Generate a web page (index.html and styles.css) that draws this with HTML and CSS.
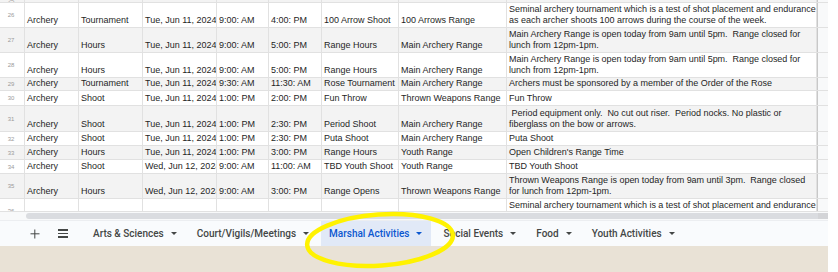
FILE: index.html
```html
<!DOCTYPE html>
<html>
<head>
<meta charset="utf-8">
<link rel="stylesheet" href="styles.css">
</head>
<body>
<div class="page">
  <div class="main">
    <div class="sheet">
      <div class="grid">
        <div class="row h3 band">
          <div class="num">25</div><div class="c">Archery</div><div class="c">Hours</div><div class="c">Mon, Jun 10, 2024</div><div class="c">9:00: AM</div><div class="c">5:00: PM</div><div class="c">Range Opens</div><div class="c">Thrown Weapons Range</div><div class="c"><span>Thrown Weapons Range is open today from 9am until 3pm.  Range closed for lunch</span></div><div class="e"></div>
        </div>
        <div class="row h25">
          <div class="num">26</div><div class="c">Archery</div><div class="c">Tournament</div><div class="c">Tue, Jun 11, 2024</div><div class="c">9:00: AM</div><div class="c">4:00: PM</div><div class="c">100 Arrow Shoot</div><div class="c">100 Arrows Range</div><div class="c"><span>Seminal archery tournament which is a test of shot placement and endurance<br>as each archer shoots 100 arrows during the course of the week.</span></div><div class="e"></div>
        </div>
        <div class="row h25 band">
          <div class="num">27</div><div class="c">Archery</div><div class="c">Hours</div><div class="c">Tue, Jun 11, 2024</div><div class="c">9:00: AM</div><div class="c">5:00: PM</div><div class="c">Range Hours</div><div class="c">Main Archery Range</div><div class="c"><span>Main Archery Range is open today from 9am until 5pm.&nbsp; Range closed for<br>lunch from 12pm-1pm.</span></div><div class="e"></div>
        </div>
        <div class="row h25">
          <div class="num">28</div><div class="c">Archery</div><div class="c">Hours</div><div class="c">Tue, Jun 11, 2024</div><div class="c">9:00: AM</div><div class="c">5:00: PM</div><div class="c">Range Hours</div><div class="c">Main Archery Range</div><div class="c"><span>Main Archery Range is open today from 9am until 5pm.&nbsp; Range closed for<br>lunch from 12pm-1pm.</span></div><div class="e"></div>
        </div>
        <div class="row h13 band">
          <div class="num">29</div><div class="c">Archery</div><div class="c">Tournament</div><div class="c">Tue, Jun 11, 2024</div><div class="c">9:30: AM</div><div class="c">11:30: AM</div><div class="c">Rose Tournament</div><div class="c">Main Archery Range</div><div class="c"><span>Archers must be sponsored by a member of the Order of the Rose</span></div><div class="e"></div>
        </div>
        <div class="row h15">
          <div class="num">30</div><div class="c">Archery</div><div class="c">Shoot</div><div class="c">Tue, Jun 11, 2024</div><div class="c">1:00: PM</div><div class="c">2:00: PM</div><div class="c">Fun Throw</div><div class="c">Thrown Weapons Range</div><div class="c"><span>Fun Throw</span></div><div class="e"></div>
        </div>
        <div class="row h26 band">
          <div class="num">31</div><div class="c">Archery</div><div class="c">Shoot</div><div class="c">Tue, Jun 11, 2024</div><div class="c">1:00: PM</div><div class="c">2:30: PM</div><div class="c">Period Shoot</div><div class="c">Main Archery Range</div><div class="c"><span>&nbsp;Period equipment only.&nbsp; No cut out riser.&nbsp; Period nocks. No plastic or<br>fiberglass on the bow or arrows.</span></div><div class="e"></div>
        </div>
        <div class="row h14">
          <div class="num">32</div><div class="c">Archery</div><div class="c">Shoot</div><div class="c">Tue, Jun 11, 2024</div><div class="c">1:00: PM</div><div class="c">2:30: PM</div><div class="c">Puta Shoot</div><div class="c">Main Archery Range</div><div class="c"><span>Puta Shoot</span></div><div class="e"></div>
        </div>
        <div class="row h14 band">
          <div class="num">33</div><div class="c">Archery</div><div class="c">Hours</div><div class="c">Tue, Jun 11, 2024</div><div class="c">1:00: PM</div><div class="c">3:00: PM</div><div class="c">Range Hours</div><div class="c">Youth Range</div><div class="c"><span>Open Children's Range Time</span></div><div class="e"></div>
        </div>
        <div class="row h14">
          <div class="num">34</div><div class="c">Archery</div><div class="c">Shoot</div><div class="c">Wed, Jun 12, 2024</div><div class="c">9:00: AM</div><div class="c">11:00: AM</div><div class="c">TBD Youth Shoot</div><div class="c">Youth Range</div><div class="c"><span>TBD Youth Shoot</span></div><div class="e"></div>
        </div>
        <div class="row h25 band">
          <div class="num">35</div><div class="c">Archery</div><div class="c">Hours</div><div class="c">Wed, Jun 12, 2024</div><div class="c">9:00: AM</div><div class="c">3:00: PM</div><div class="c">Range Opens</div><div class="c">Thrown Weapons Range</div><div class="c"><span>Thrown Weapons Range is open today from 9am until 3pm.&nbsp; Range closed<br>for lunch from 12pm-1pm.</span></div><div class="e"></div>
        </div>
        <div class="row h25">
          <div class="num">36</div><div class="c"></div><div class="c"></div><div class="c"></div><div class="c"></div><div class="c"></div><div class="c"></div><div class="c"></div><div class="c top"><span>Seminal archery tournament which is a test of shot placement and endurance<br>as each archer shoots 100 arrows during the course of the week.</span></div><div class="e"></div>
        </div>
      </div>
      <div class="hscroll"><div class="thumb"></div><div class="track"></div></div>
    </div>
    <div class="tabbar">
      <div class="btn plus"><span class="plus-h"></span><span class="plus-v"></span></div>
      <div class="btn menu"><span class="bar"></span><span class="bar"></span><span class="bar"></span></div>
      <div class="tab"><span class="label">Arts &amp; Sciences</span><span class="caret"></span></div>
      <div class="tab"><span class="label">Court/Vigils/Meetings</span><span class="caret"></span></div>
      <div class="tab active"><span class="label">Marshal Activities</span><span class="caret"></span></div>
      <div class="tab"><span class="label">Social Events</span><span class="caret"></span></div>
      <div class="tab"><span class="label">Food</span><span class="caret"></span></div>
      <div class="tab"><span class="label">Youth Activities</span><span class="caret"></span></div>
    </div>
    <div class="desk"></div>
  </div>
  <svg class="circle" width="838" height="272" viewBox="0 0 838 272">
    <ellipse cx="380" cy="240" rx="73" ry="25.5" transform="rotate(-4 380 240)" fill="none" stroke="#fff200" stroke-width="4.5"/>
  </svg>
</div>
</body>
</html>
```
FILE: styles.css
```css
html, body {
  margin: 0;
  padding: 0;
  background: #ffffff;
}
.page {
  position: relative;
  width: 838px;
  height: 272px;
  overflow: hidden;
  font-family: "Liberation Sans", Arial, sans-serif;
}
.main {
  width: 828px;
  display: flex;
  flex-direction: column;
}
.sheet {
  display: flex;
  flex-direction: column;
}
.grid {
  height: 211px;
  overflow: hidden;
  display: flex;
  flex-direction: column;
}
.row {
  flex: none;
  display: grid;
  grid-template-columns: 25px 54px 64px 74px 52px 53px 77px 108px 310px 11px;
  box-sizing: border-box;
  border-bottom: 1px solid #e1e1e1;
  background: #ffffff;
  overflow: hidden;
}
.row.band { background: #f3f3f3; }
.h3 { height: 3px; }
.h13 { height: 13px; }
.h14 { height: 14px; }
.h15 { height: 15px; }
.h25 { height: 25px; }
.h26 { height: 26px; }
.c, .num, .e {
  box-sizing: border-box;
  border-right: 1px solid #e1e1e1;
  overflow: hidden;
  white-space: nowrap;
  min-width: 0;
}
.c {
  display: flex;
  align-items: flex-end;
  padding: 0 0 1px 2px;
  font-size: 9px;
  line-height: 11px;
  color: #1f1f1f;
}
.c span { display: block; letter-spacing: -0.02px; }
.c.top { align-items: flex-start; padding-top: 1px; }
.num {
  display: flex;
  align-items: center;
  justify-content: center;
  padding-right: 2px;
  font-size: 6px;
  color: #9a9a9a;
}
.e { border-right: none; background: #f8f9fa; border-left: 1px solid #c8c8c8; }

.hscroll {
  height: 9px;
  display: flex;
  align-items: center;
  padding-left: 26px;
  background: #f8f9fa;
  border-top: 1px solid #e1e1e1;
  box-sizing: border-box;
}
.thumb {
  width: 792px;
  height: 6px;
  background: #dadce0;
  border-radius: 3px 0 0 3px;
}
.track {
  flex: 1;
  height: 6px;
  background: #d3d4d7;
}
.tabbar {
  height: 26px;
  box-sizing: border-box;
  border-top: 1px solid #eceef1;
  background: #f9fbfd;
  display: flex;
  align-items: stretch;
  padding-left: 23px;
  font-family: Roboto, "Liberation Sans", sans-serif;
  font-size: 10px;
  font-weight: 500;
  color: #444746;
}
.btn {
  width: 24px;
  display: flex;
  align-items: center;
  justify-content: center;
  position: relative;
}
.menu { margin-left: 4px; flex-direction: column; gap: 2px; margin-right: 10px; }
.plus-h { position: absolute; width: 9px; height: 1.4px; background: #444746; top: 50%; left: 50%; transform: translate(-50%, -50%); }
.plus-v { position: absolute; width: 1.4px; height: 9px; background: #444746; top: 50%; left: 50%; transform: translate(-50%, -50%); }
.bar { width: 10px; height: 1.4px; background: #444746; display: block; }
.tab {
  display: flex;
  align-items: center;
  padding: 0 8px 0 8px;
  margin-right: 4px;
  gap: 7px;
  white-space: nowrap;
}
.tab.active {
  background: #e1e9f7;
  color: #0b57d0;
  padding-right: 9px;
}
.caret {
  width: 0;
  height: 0;
  border-left: 3px solid transparent;
  border-right: 3px solid transparent;
  border-top: 3px solid currentColor;
}
.desk {
  height: 26px;
  background: #e9e2d6;
}
.circle {
  position: absolute;
  left: 0;
  top: 0;
  pointer-events: none;
}
```
